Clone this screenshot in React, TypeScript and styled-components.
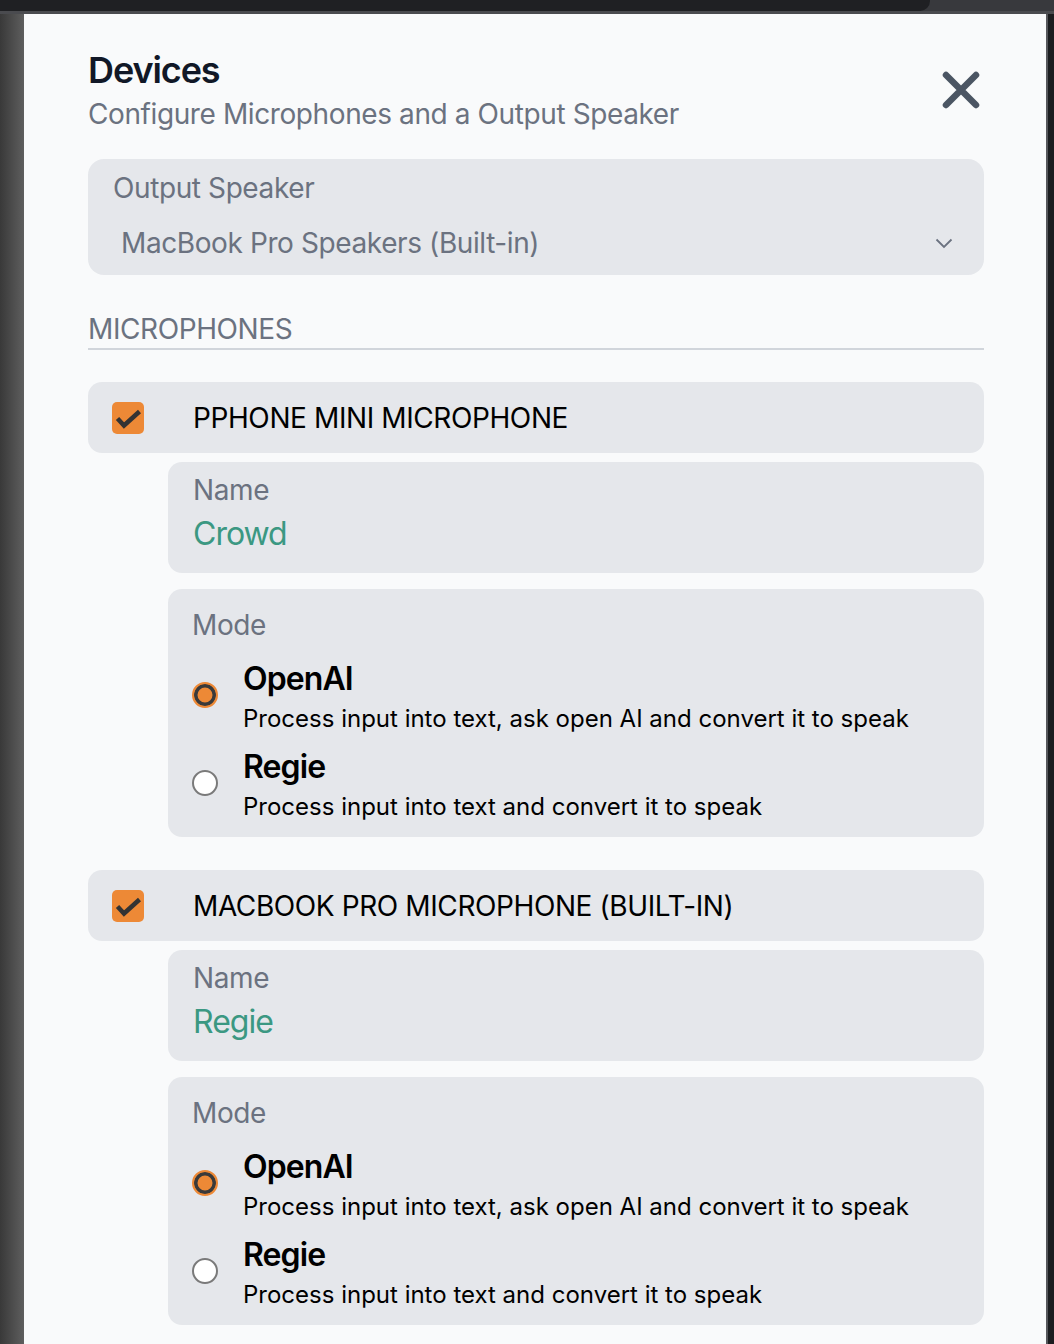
import React from "react";
import styled, { createGlobalStyle } from "styled-components";

const GlobalStyle = createGlobalStyle`
  *, *::before, *::after { box-sizing: border-box; }
  html, body { margin: 0; padding: 0; }
  body {
    background: #1e1f22;
    font-family: Inter, "Noto Sans", "Liberation Sans", sans-serif;
    -webkit-font-smoothing: antialiased;
  }
`;

const Frame = styled.div`
  min-height: 100vh;
  display: flex;
  flex-direction: column;
  background: #1e1f22;
`;

const TopBar = styled.div`
  height: 11px;
  display: flex;
  background: #38393d;
`;

const TopTab = styled.div`
  width: 930px;
  background: #1f2023;
  border-bottom-right-radius: 10px;
`;

const TopRule = styled.div`
  height: 3px;
  background: #4a4b4f;
`;

const Body = styled.div`
  flex: 1;
  display: flex;
`;

const LeftEdge = styled.div`
  width: 24px;
  flex: none;
  background: linear-gradient(to right, #393939, #5e5e5e);
`;

const RightEdge = styled.div`
  width: 8px;
  flex: none;
  border-left: 2px solid #56575b;
  background: #1c1d20;
`;

const Panel = styled.main`
  flex: 1;
  background: #f9fafb;
  padding: 34px 62px 40px 64px;
`;

const Header = styled.header`
  display: flex;
  align-items: center;
  justify-content: space-between;
`;

const TitleBlock = styled.div`
  display: flex;
  flex-direction: column;
`;

const Title = styled.h1`
  margin: 0;
  font-size: 36px;
  line-height: 44px;
  font-weight: 600;
  letter-spacing: -1.1px;
  color: #111827;
`;

const Subtitle = styled.p`
  margin: 4px 0 0;
  font-size: 28px;
  line-height: 36px;
  letter-spacing: -0.4px;
  color: #6b7280;
`;

const CloseButton = styled.button`
  border: 0;
  background: none;
  padding: 0;
  margin-right: 4px;
  width: 38px;
  height: 38px;
  display: flex;
  cursor: pointer;
`;

const FieldBox = styled.div<{ $indent?: boolean }>`
  background: #e5e7eb;
  border-radius: 16px;
  margin-left: ${(p) => (p.$indent ? "80px" : "0")};
`;

const SpeakerBox = styled(FieldBox)`
  margin-top: 27px;
  padding: 11px 31px 14px 25px;
`;

const FieldLabel = styled.div`
  font-size: 28px;
  line-height: 36px;
  letter-spacing: -0.4px;
  color: #6b7280;
`;

const SelectRow = styled.div`
  margin-top: 19px;
  padding-left: 8px;
  display: flex;
  align-items: center;
  justify-content: space-between;
`;

const SelectValue = styled.span`
  font-size: 28px;
  line-height: 36px;
  letter-spacing: -0.4px;
  color: #6b7280;
`;

const SectionTitle = styled.h2`
  margin: 36px 0 0;
  padding-bottom: 1px;
  font-size: 28px;
  line-height: 36px;
  font-weight: 400;
  letter-spacing: -0.4px;
  color: #6b7280;
  border-bottom: 2px solid #d1d5db;
`;

const MicList = styled.div`
  margin-top: 32px;
  display: flex;
  flex-direction: column;
  gap: 33px;
`;

const MicGroup = styled.section`
  display: flex;
  flex-direction: column;
`;

const MicHeader = styled.div`
  height: 71px;
  background: #e5e7eb;
  border-radius: 14px;
  padding-left: 24px;
  display: flex;
  align-items: center;
  gap: 49px;
`;

const MicTitle = styled.span`
  font-size: 28px;
  line-height: 36px;
  letter-spacing: -0.4px;
  color: #000;
  text-transform: uppercase;
`;

const NameBox = styled(FieldBox)`
  margin-top: 9px;
  border-radius: 14px;
  padding: 10px 25px 19px;
`;

const NameValue = styled.div`
  margin-top: 6px;
  font-size: 32px;
  line-height: 40px;
  letter-spacing: -1px;
  color: #3b9882;
`;

const ModeBox = styled(FieldBox)`
  margin-top: 16px;
  border-radius: 14px;
  padding: 18px 25px 14px 24px;
`;

const Options = styled.div`
  margin-top: 16px;
  display: flex;
  flex-direction: column;
  gap: 12px;
`;

const Option = styled.label`
  display: flex;
  align-items: center;
  gap: 25px;
`;

const Radio = styled.span<{ $checked: boolean }>`
  width: 26px;
  height: 26px;
  flex: none;
  margin-bottom: 4px;
  border-radius: 50%;
  ${(p) =>
    p.$checked
      ? `background: #ed8936; border: 2px solid #ed8936; box-shadow: inset 0 0 0 3.5px #3a3a3a;`
      : `background: #ffffff; border: 2px solid #7a7a7a;`}
`;

const OptionText = styled.div`
  display: flex;
  flex-direction: column;
`;

const OptionTitle = styled.span`
  font-size: 32px;
  line-height: 40px;
  font-weight: 600;
  letter-spacing: -0.9px;
  color: #000;
`;

const OptionDesc = styled.span`
  margin-top: 4px;
  font-size: 24px;
  line-height: 32px;
  color: #000;
`;

const CheckBox = () => (
  <svg width="32" height="32" viewBox="0 0 32 32" aria-hidden>
    <rect width="32" height="32" rx="5" fill="#ed8936" />
    <polyline
      points="5.5,16.5 12,23.5 27.5,9.5"
      fill="none"
      stroke="#333"
      strokeWidth="4.5"
    />
  </svg>
);

const CloseIcon = () => (
  <svg width="38" height="38" viewBox="0 0 38 38" aria-hidden>
    <path
      d="M4 4 L34 34 M34 4 L4 34"
      stroke="#4b5563"
      strokeWidth="6.5"
      strokeLinecap="round"
    />
  </svg>
);

const Chevron = () => (
  <svg width="18" height="11" viewBox="0 0 18 11" aria-hidden>
    <polyline points="1.5,1.5 9,9 16.5,1.5" fill="none" stroke="#6b7280" strokeWidth="1.8" />
  </svg>
);

const modes = [
  { id: "openai", title: "OpenAI", desc: "Process input into text, ask open AI and convert it to speak" },
  { id: "regie", title: "Regie", desc: "Process input into text and convert it to speak" },
];

const mics = [
  { device: "PPhone mini Microphone", name: "Crowd", mode: "openai" },
  { device: "MacBook Pro Microphone (Built-in)", name: "Regie", mode: "openai" },
];

export default function App() {
  return (
    <>
      <GlobalStyle />
      <Frame>
        <TopBar>
          <TopTab />
        </TopBar>
        <TopRule />
        <Body>
          <LeftEdge />
          <Panel>
            <Header>
              <TitleBlock>
                <Title>Devices</Title>
                <Subtitle>Configure Microphones and a Output Speaker</Subtitle>
              </TitleBlock>
              <CloseButton aria-label="Close">
                <CloseIcon />
              </CloseButton>
            </Header>

            <SpeakerBox>
              <FieldLabel>Output Speaker</FieldLabel>
              <SelectRow>
                <SelectValue>MacBook Pro Speakers (Built-in)</SelectValue>
                <Chevron />
              </SelectRow>
            </SpeakerBox>

            <SectionTitle>MICROPHONES</SectionTitle>

            <MicList>
              {mics.map((mic) => (
                <MicGroup key={mic.device}>
                  <MicHeader>
                    <CheckBox />
                    <MicTitle>{mic.device}</MicTitle>
                  </MicHeader>
                  <NameBox $indent>
                    <FieldLabel>Name</FieldLabel>
                    <NameValue>{mic.name}</NameValue>
                  </NameBox>
                  <ModeBox $indent>
                    <FieldLabel>Mode</FieldLabel>
                    <Options>
                      {modes.map((m) => (
                        <Option key={m.id}>
                          <Radio $checked={mic.mode === m.id} />
                          <OptionText>
                            <OptionTitle>{m.title}</OptionTitle>
                            <OptionDesc>{m.desc}</OptionDesc>
                          </OptionText>
                        </Option>
                      ))}
                    </Options>
                  </ModeBox>
                </MicGroup>
              ))}
            </MicList>
          </Panel>
          <RightEdge />
        </Body>
      </Frame>
    </>
  );
}
